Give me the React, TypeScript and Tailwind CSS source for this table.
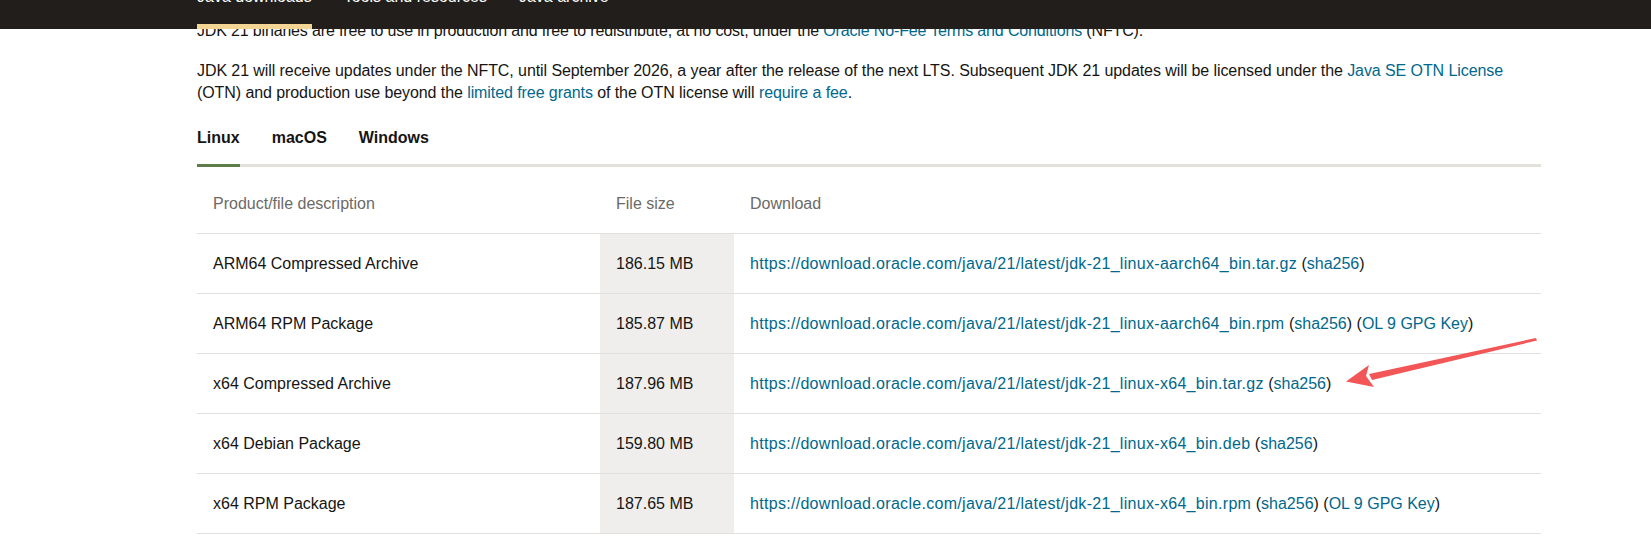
import type { ReactNode } from 'react'

const navItems = [
  { label: 'Java downloads', active: true },
  { label: 'Tools and resources', active: false },
  { label: 'Java archive', active: false },
]

const tabs = ['Linux', 'macOS', 'Windows']

type Row = {
  description: string
  size: string
  url: string
  gpgKey?: boolean
}

const rows: Row[] = [
  {
    description: 'ARM64 Compressed Archive',
    size: '186.15 MB',
    url: 'https://download.oracle.com/java/21/latest/jdk-21_linux-aarch64_bin.tar.gz',
  },
  {
    description: 'ARM64 RPM Package',
    size: '185.87 MB',
    url: 'https://download.oracle.com/java/21/latest/jdk-21_linux-aarch64_bin.rpm',
    gpgKey: true,
  },
  {
    description: 'x64 Compressed Archive',
    size: '187.96 MB',
    url: 'https://download.oracle.com/java/21/latest/jdk-21_linux-x64_bin.tar.gz',
  },
  {
    description: 'x64 Debian Package',
    size: '159.80 MB',
    url: 'https://download.oracle.com/java/21/latest/jdk-21_linux-x64_bin.deb',
  },
  {
    description: 'x64 RPM Package',
    size: '187.65 MB',
    url: 'https://download.oracle.com/java/21/latest/jdk-21_linux-x64_bin.rpm',
    gpgKey: true,
  },
]

function Link({ children, wide = false }: { children: ReactNode; wide?: boolean }) {
  return <a className={`text-[#00688c] ${wide ? 'tracking-[0.3px]' : ''}`}>{children}</a>
}

function TopNav() {
  return (
    <header className="absolute inset-x-0 top-0 z-10 h-[29px] bg-[#211e1c]">
      <nav className="flex h-full gap-8 pl-[197px]">
        {navItems.map((item) => (
          <div
            key={item.label}
            className={`flex h-full flex-col ${
              item.active ? 'border-b-[5px] border-[#f4d594]' : ''
            }`}
          >
            <span className="-mt-[13px] whitespace-nowrap leading-5 text-white">
              {item.label}
            </span>
          </div>
        ))}
      </nav>
    </header>
  )
}

function OsTabs() {
  return (
    <div className="mt-[23px] flex items-start gap-8 border-b-[3px] border-[#e4e1dc]">
      {tabs.map((tab, index) => (
        <div
          key={tab}
          className={`pb-[15px] font-bold leading-[22px] text-[#161513] ${
            index === 0 ? '-mb-[3px] border-b-[3px] border-[#5e7d4c]' : ''
          }`}
        >
          {tab}
        </div>
      ))}
    </div>
  )
}

function DownloadTable() {
  return (
    <div className="mt-[7px]">
      <div className="grid h-[60px] grid-cols-[403px_134px_1fr] border-b border-[#e2e0dd] text-[#6c6a67]">
        <div className="flex items-center px-4">Product/file description</div>
        <div className="flex items-center px-4">File size</div>
        <div className="flex items-center px-4">Download</div>
      </div>
      {rows.map((row) => (
        <div
          key={row.url}
          className="grid h-[60px] grid-cols-[403px_134px_1fr] border-b border-[#e2e0dd]"
        >
          <div className="flex items-center px-4">{row.description}</div>
          <div className="flex items-center bg-[#f0eeec] px-4">{row.size}</div>
          <div className="flex items-center whitespace-pre px-4">
            <Link wide>{row.url}</Link>
            {' ('}
            <Link>sha256</Link>
            {')'}
            {row.gpgKey ? (
              <>
                {' ('}
                <Link>OL 9 GPG Key</Link>
                {')'}
              </>
            ) : null}
          </div>
        </div>
      ))}
    </div>
  )
}

function Arrow() {
  return (
    <svg
      className="pointer-events-none absolute left-0 top-0 z-20"
      width="1651"
      height="554"
      viewBox="0 0 1651 554"
    >
      <polygon points="1536,338 1537,340.5 1372,380 1369,374" fill="#f25656" />
      <polygon points="1346,381.5 1369,365 1366,376 1374,387" fill="#f25656" />
    </svg>
  )
}

export default function App() {
  return (
    <div className="relative h-[554px] w-full overflow-hidden bg-white font-['Liberation_Sans',Arial,sans-serif] text-[16px] text-[#161513]">
      <TopNav />

      <main className="w-[1541px] pl-[197px] pt-5">
        <p className="mb-[18px] leading-[22px] tracking-[-0.15px]">
          JDK 21 binaries are free to use in production and free to redistribute, at no cost, under
          the <Link>Oracle No-Fee Terms and Conditions</Link> (NFTC).
        </p>
        <p className="leading-[22px] tracking-[-0.08px]">
          JDK 21 will receive updates under the NFTC, until September 2026, a year after the release
          of the next LTS. Subsequent JDK 21 updates will be licensed under the{' '}
          <Link>Java SE OTN License</Link>
          <br />
          (OTN) and production use beyond the <Link>limited free grants</Link> of the OTN license
          will <Link>require a fee</Link>.
        </p>

        <OsTabs />
        <DownloadTable />
      </main>

      <Arrow />
    </div>
  )
}
